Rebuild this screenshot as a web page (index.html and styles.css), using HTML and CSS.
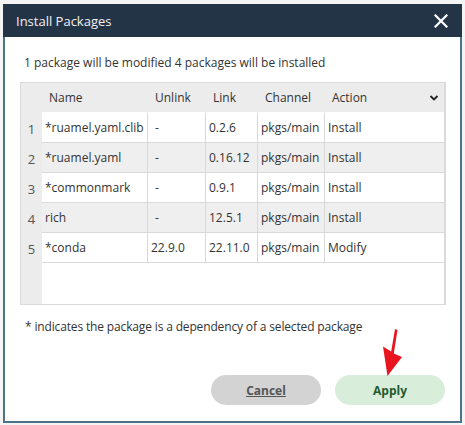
FILE: index.html
```html
<!DOCTYPE html>
<html>
<head>
<meta charset="utf-8">
<link rel="stylesheet" href="styles.css">
</head>
<body>
<div class="dialog">
  <div class="titlebar">
    <span class="title">Install Packages</span>
    <svg class="close" width="14" height="14" viewBox="0 0 14 14"><path d="M1.5 1.5 L12.5 12.5 M12.5 1.5 L1.5 12.5" stroke="#fff" stroke-width="2.2" stroke-linecap="square"/></svg>
  </div>
  <div class="body">
    <div class="msg">1 package will be modified 4 packages will be installed</div>
    <div class="grid">
      <div class="hd idx"></div>
      <div class="hd">Name</div>
      <div class="hd">Unlink</div>
      <div class="hd">Link</div>
      <div class="hd">Channel</div>
      <div class="hd act">Action<svg width="10" height="8" viewBox="0 0 10 8"><path d="M1.5 2 L5 5.5 L8.5 2" fill="none" stroke="#222" stroke-width="1.8"/></svg></div>

      <div class="idx">1</div>
      <div class="c">*ruamel.yaml.clib</div><div class="c"><span class="dash">-</span></div><div class="c">0.2.6</div><div class="c">pkgs/main</div><div class="c last">Install</div>

      <div class="idx">2</div>
      <div class="c alt">*ruamel.yaml</div><div class="c alt"><span class="dash">-</span></div><div class="c alt">0.16.12</div><div class="c alt">pkgs/main</div><div class="c alt last">Install</div>

      <div class="idx">3</div>
      <div class="c">*commonmark</div><div class="c"><span class="dash">-</span></div><div class="c">0.9.1</div><div class="c">pkgs/main</div><div class="c last">Install</div>

      <div class="idx">4</div>
      <div class="c alt">rich</div><div class="c alt"><span class="dash">-</span></div><div class="c alt">12.5.1</div><div class="c alt">pkgs/main</div><div class="c alt last">Install</div>

      <div class="idx">5</div>
      <div class="c">*conda</div><div class="c">22.9.0</div><div class="c">22.11.0</div><div class="c">pkgs/main</div><div class="c last">Modify</div>
    </div>
    <div class="note">* indicates the package is a dependency of a selected package</div>
    <div class="buttons">
      <button class="btn cancel">Cancel</button>
      <button class="btn apply">Apply</button>
    </div>
  </div>
  <svg class="arrow" width="30" height="52" viewBox="380 328 30 52"><path d="M395 329 L397.5 330 L393.8 353.5 L402 357 L387.5 376 L383 346.5 L391.2 351.5 Z" fill="#e8141f"/></svg>
</div>
</body>
</html>
```
FILE: styles.css
```css
html, body { margin: 0; padding: 0; }
body {
  width: 465px;
  height: 425px;
  overflow: hidden;
  background: #f4f4f4;
  font-family: "Open Sans", "Noto Sans", sans-serif;
  padding: 4px 0 0 3px;
  box-sizing: border-box;
  position: relative;
}
.dialog {
  position: relative;
  width: 459px;
  height: 419px;
  box-sizing: border-box;
  border: 2px solid #4d7389;
  border-top: none;
  background: #fff;
}
.titlebar {
  height: 33px;
  background: #243447;
  margin: 0 -2px;
  padding: 0 14px 0 13px;
  display: flex;
  align-items: center;
  justify-content: space-between;
}
.title { color: #f2f2f2; font-size: 13px; }
.close { display: block; }
.body { padding: 0 14px 0 15px; }
.msg {
  margin-top: 18px;
  padding-left: 4px;
  font-size: 12px;
  line-height: 16px;
  color: #333;
}
.grid {
  margin-top: 11px;
  height: 223px;
  box-sizing: border-box;
  border: 1px solid #dadada;
  border-right-width: 2px;
  display: grid;
  grid-template-columns: 21px 106px 58px 52px 67px 1fr;
  grid-auto-rows: 30px;
  align-content: start;
  background: linear-gradient(to right, #ececec 21px, #fff 21px);
  font-size: 12px;
  color: #333;
}
.hd {
  background: #ececec;
  display: flex;
  align-items: center;
  padding-left: 7px;
  height: 29px;
}
.hd.idx { padding: 0; }
.act { justify-content: space-between; padding-right: 5px; }
.idx {
  display: flex;
  align-items: center;
  justify-content: center;
  color: #555;
  font-size: 13px;
  padding-top: 1px;
}
.c {
  display: flex;
  align-items: center;
  padding-left: 3px;
  border-right: 1px solid #d9d9d9;
  border-bottom: 1px solid #d9d9d9;
  background: #fff;
  white-space: nowrap;
  overflow: hidden;
}
.c.alt { background: #efefef; }
.c.last { border-right: none; }
.dash { padding-left: 4px; }
.note {
  margin-top: 14px;
  padding-left: 5px;
  font-size: 12px;
  line-height: 16px;
  color: #333;
  letter-spacing: -0.15px;
}
.buttons {
  margin-top: 40px;
  display: flex;
  justify-content: flex-end;
  gap: 14px;
  padding-right: 1px;
}
.btn {
  width: 110px;
  height: 30px;
  border: none;
  border-radius: 15px;
  font-family: inherit;
  font-size: 12px;
  font-weight: bold;
  padding: 0;
}
.cancel { background: #d3d3d3; color: #555; text-decoration: underline; }
.apply { background: #d8eedb; color: #1f5c2e; }
.arrow {
  position: absolute;
  left: 375px;
  top: 324px;
}
```
